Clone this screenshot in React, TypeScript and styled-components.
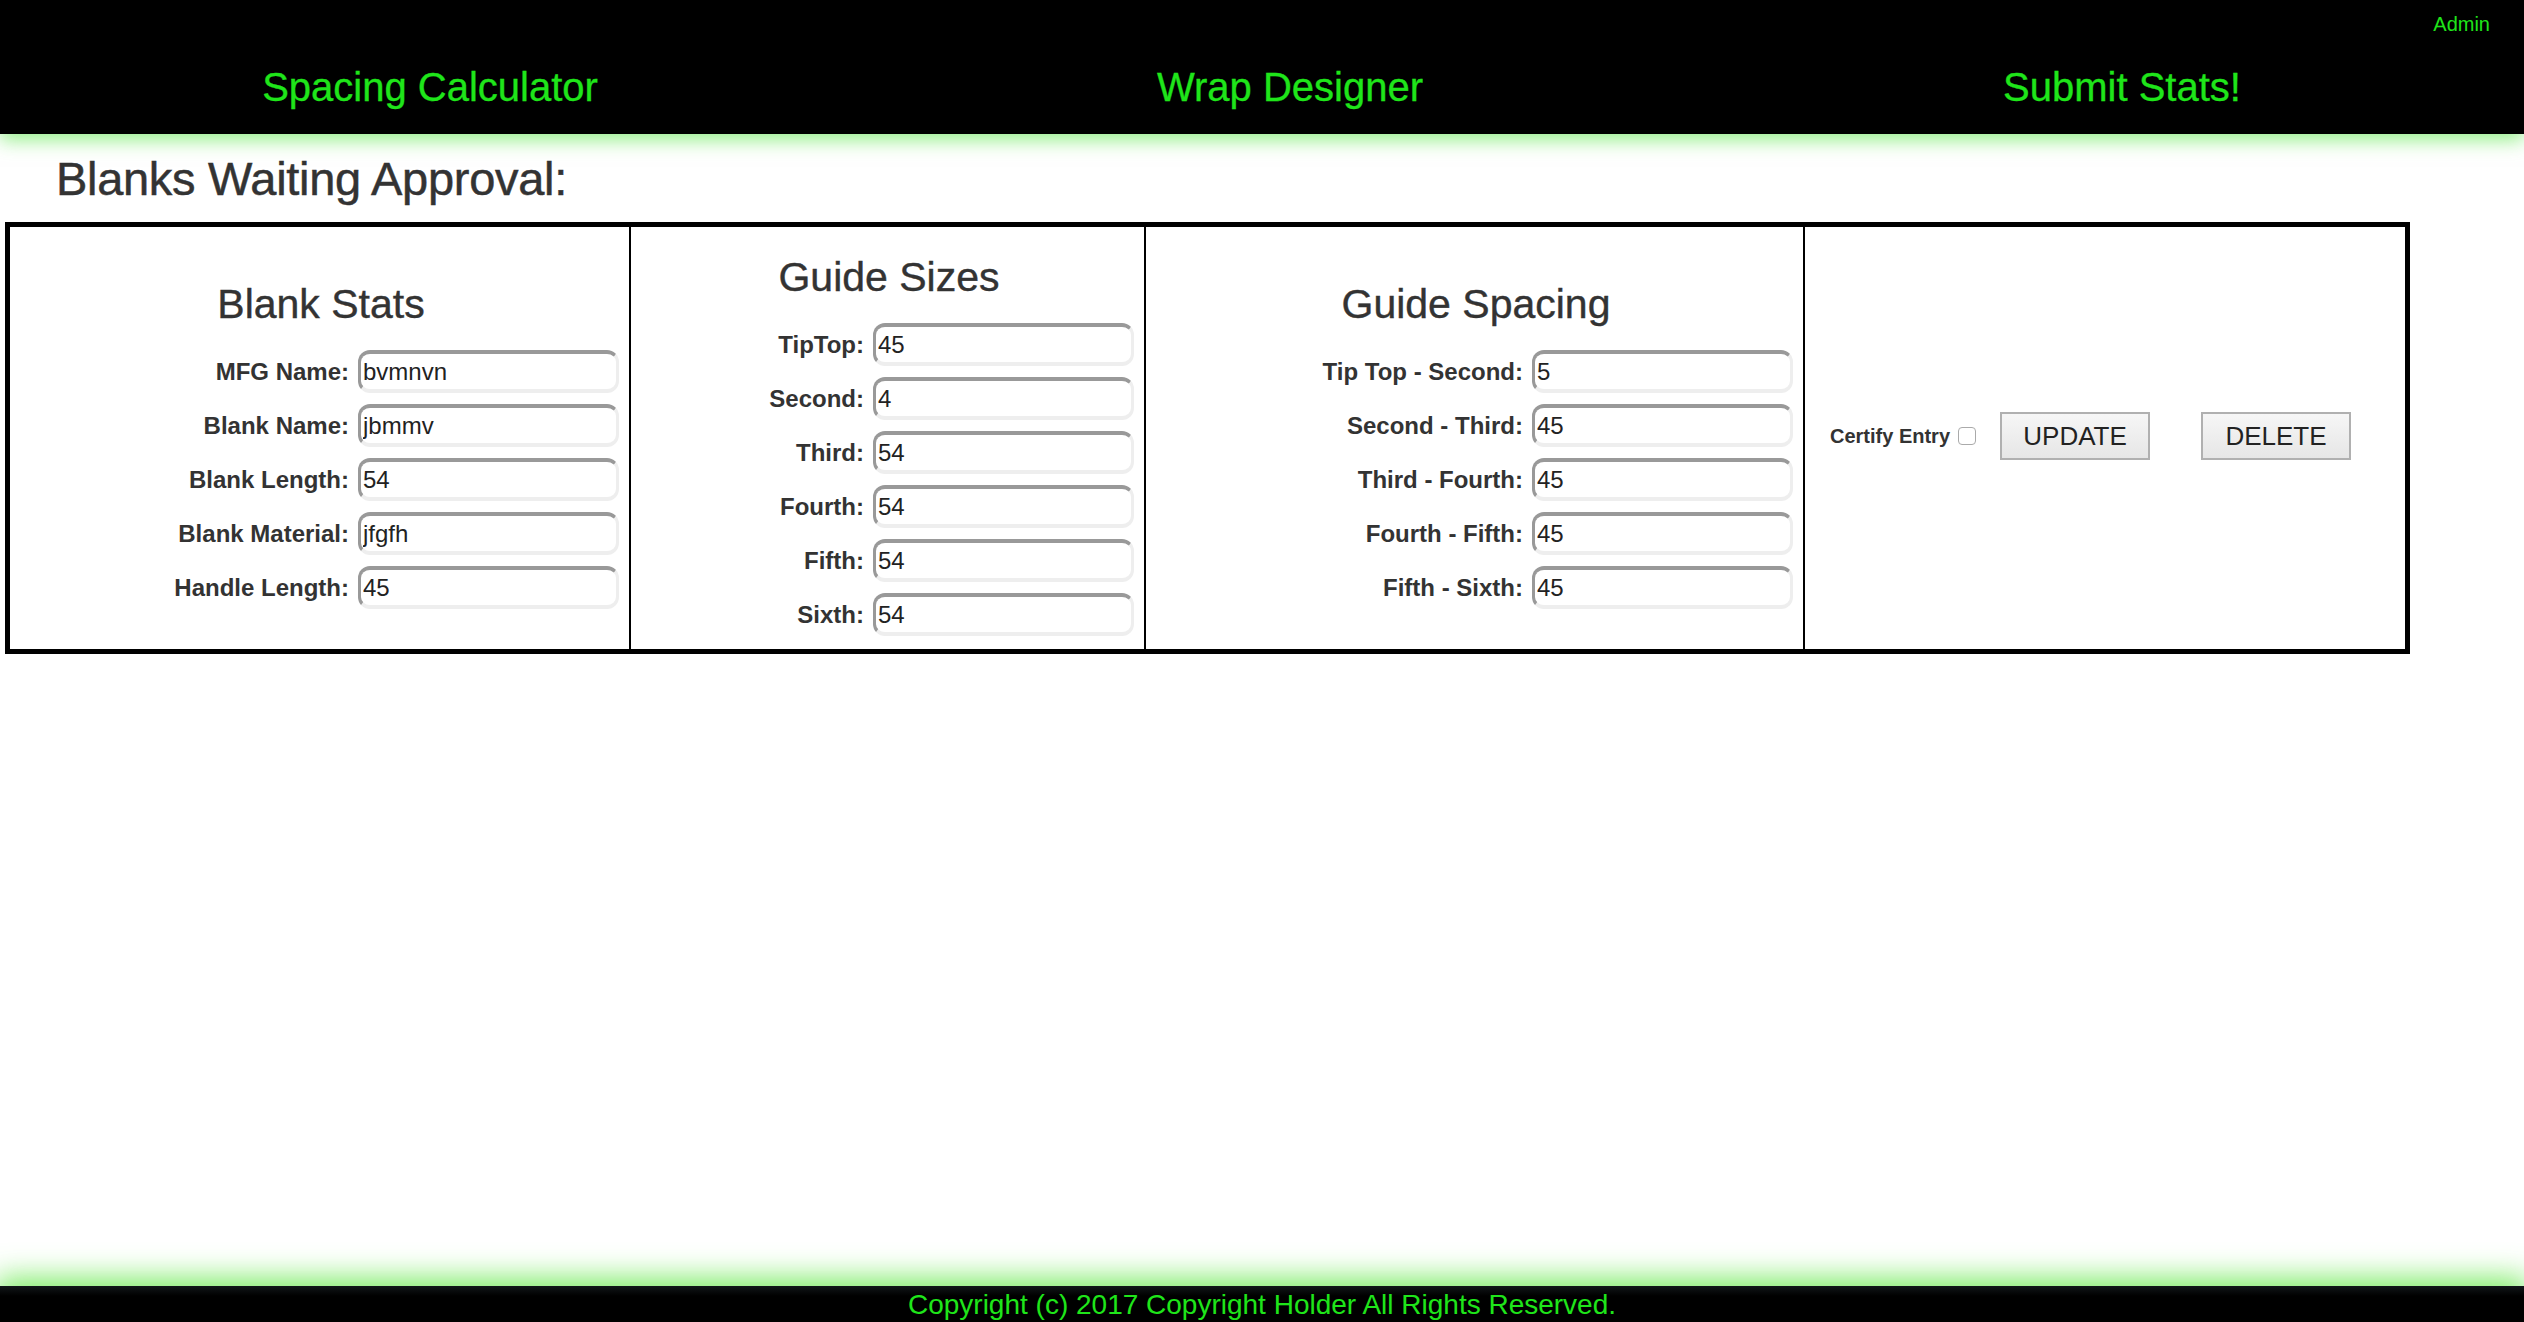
import React from "react";
import styled, { createGlobalStyle } from "styled-components";

const GREEN = "#1fe51a";

const Global = createGlobalStyle`
  html, body { margin: 0; padding: 0; background: #fff; }
  body { font-family: "Liberation Sans", Arial, Helvetica, sans-serif; color: #333; }
  * { box-sizing: border-box; }
`;

const Page = styled.div`
  min-height: 100vh;
  display: flex;
  flex-direction: column;
`;

const Header = styled.header`
  position: relative;
  height: 134px;
  background: #000;
  box-shadow: 0 6px 18px rgba(60, 225, 40, 0.55);
  display: grid;
  grid-template-columns: 860px 860px 804px;
  align-items: start;
  z-index: 1;
`;

const NavLink = styled.a`
  margin-top: 64px;
  text-align: center;
  color: ${GREEN};
  font-size: 40px;
  line-height: 46px;
  text-decoration: none;
  -webkit-text-stroke: 0.3px ${GREEN};
`;

const AdminLink = styled.a`
  position: absolute;
  top: 12px;
  right: 34px;
  color: ${GREEN};
  font-size: 20px;
  line-height: 24px;
  text-decoration: none;
`;

const Main = styled.main`
  padding: 20px 0 0 5px;
`;

const Title = styled.h2`
  margin: 0 0 18px 51px;
  font-size: 47px;
  line-height: 50px;
  font-weight: normal;
  color: #333;
  letter-spacing: -0.3px;
  -webkit-text-stroke: 0.5px #333;
`;

const Board = styled.div`
  width: 2405px;
  border: 5px solid #000;
  display: grid;
  grid-template-columns: 621px 515px 659px 1fr;
`;

const Cell = styled.section<{ $last?: boolean }>`
  display: flex;
  flex-direction: column;
  justify-content: center;
  padding: 26px 10px 12px 13px;
  border-right: ${(p) => (p.$last ? "none" : "2px solid #000")};
  min-height: 422px;
`;

const CellHeading = styled.h3`
  margin: 0 0 23px 0;
  text-align: center;
  font-size: 41px;
  line-height: 46px;
  font-weight: normal;
  color: #333;
  -webkit-text-stroke: 0.4px #333;
`;

const Rows = styled.div`
  display: flex;
  flex-direction: column;
  gap: 11px;
  align-items: flex-end;
`;

const Row = styled.label`
  display: flex;
  align-items: center;
  gap: 9px;
`;

const FieldLabel = styled.span`
  font-size: 24px;
  font-weight: bold;
  color: #333;
  white-space: nowrap;
`;

const TextInput = styled.input`
  width: 261px;
  height: 43px;
  border-style: solid;
  border-width: 4px 3px 4px 3px;
  border-color: #999 #eee #eee #999;
  border-radius: 12px;
  padding: 0 0 0 2px;
  font-family: "Liberation Sans", Arial, sans-serif;
  font-size: 24px;
  color: #222;
  background: #fff;
  outline: none;
`;

const ActionBar = styled.div`
  display: flex;
  align-items: center;
  padding-left: 12px;
  margin-top: -18px;
`;

const CertifyLabel = styled.label`
  display: flex;
  align-items: center;
  gap: 8px;
  font-size: 20px;
  font-weight: bold;
  color: #333;
  margin-right: 24px;
`;

const Check = styled.span`
  display: inline-block;
  width: 18px;
  height: 18px;
  border: 1px solid #aaa;
  border-radius: 4px;
  background: #fff;
`;

const ActionButton = styled.button<{ $gapAfter?: number }>`
  width: 150px;
  height: 48px;
  margin-right: ${(p) => p.$gapAfter ?? 0}px;
  border: 2px solid #b0b0b0;
  background: linear-gradient(#f6f6f6, #e6e6e6);
  font-family: "Liberation Sans", Arial, sans-serif;
  font-size: 26px;
  color: #222;
  padding: 0;
`;

const Footer = styled.footer`
  margin-top: auto;
  height: 36px;
  background: linear-gradient(#111619 0px, #000 10px, #000 100%);
  box-shadow: 0 -4px 30px 4px rgba(80, 230, 50, 0.75);
  text-align: center;
  color: ${GREEN};
  font-size: 28px;
  line-height: 37px;
  overflow: hidden;
`;

type Field = { label: string; value: string };

const blankStats: Field[] = [
  { label: "MFG Name:", value: "bvmnvn" },
  { label: "Blank Name:", value: "jbmmv" },
  { label: "Blank Length:", value: "54" },
  { label: "Blank Material:", value: "jfgfh" },
  { label: "Handle Length:", value: "45" },
];

const guideSizes: Field[] = [
  { label: "TipTop:", value: "45" },
  { label: "Second:", value: "4" },
  { label: "Third:", value: "54" },
  { label: "Fourth:", value: "54" },
  { label: "Fifth:", value: "54" },
  { label: "Sixth:", value: "54" },
];

const guideSpacing: Field[] = [
  { label: "Tip Top - Second:", value: "5" },
  { label: "Second - Third:", value: "45" },
  { label: "Third - Fourth:", value: "45" },
  { label: "Fourth - Fifth:", value: "45" },
  { label: "Fifth - Sixth:", value: "45" },
];

function FieldGroup({ title, fields }: { title: string; fields: Field[] }) {
  return (
    <Cell>
      <CellHeading>{title}</CellHeading>
      <Rows>
        {fields.map((f) => (
          <Row key={f.label}>
            <FieldLabel>{f.label}</FieldLabel>
            <TextInput defaultValue={f.value} />
          </Row>
        ))}
      </Rows>
    </Cell>
  );
}

export default function App() {
  return (
    <Page>
      <Global />
      <Header>
        <NavLink href="#">Spacing Calculator</NavLink>
        <NavLink href="#">Wrap Designer</NavLink>
        <NavLink href="#">Submit Stats!</NavLink>
        <AdminLink href="#">Admin</AdminLink>
      </Header>
      <Main>
        <Title>Blanks Waiting Approval:</Title>
        <Board>
          <FieldGroup title="Blank Stats" fields={blankStats} />
          <FieldGroup title="Guide Sizes" fields={guideSizes} />
          <FieldGroup title="Guide Spacing" fields={guideSpacing} />
          <Cell $last>
            <ActionBar>
              <CertifyLabel>
                Certify Entry
                <Check />
              </CertifyLabel>
              <ActionButton $gapAfter={51}>UPDATE</ActionButton>
              <ActionButton>DELETE</ActionButton>
            </ActionBar>
          </Cell>
        </Board>
      </Main>
      <Footer>Copyright (c) 2017 Copyright Holder All Rights Reserved.</Footer>
    </Page>
  );
}
